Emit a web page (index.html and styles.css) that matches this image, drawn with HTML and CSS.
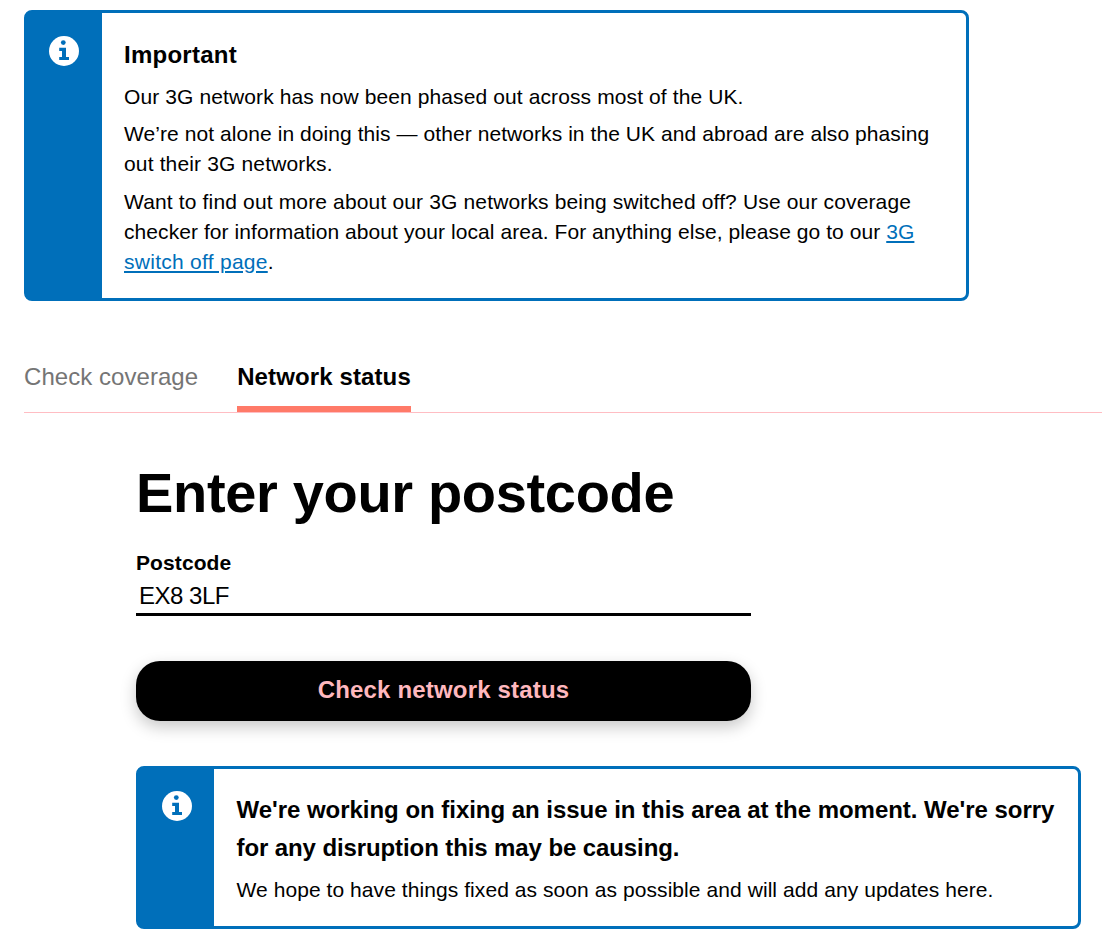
FILE: index.html
```html
<!DOCTYPE html>
<html lang="en">
<head>
    <meta charset="UTF-8">
    <meta name="viewport" content="width=device-width, initial-scale=1.0">
    <title>Network status</title>

    <link rel="stylesheet" href="styles.css">
</head>
<body>

    <section class="notice">
        <div class="notice-side">
            <svg class="info" viewBox="0 0 30 30" aria-hidden="true">
                <circle cx="15" cy="15" r="15" fill="#fff"/>
                <circle cx="14.3" cy="6.6" r="2.4" fill="#006fba"/>
                <path d="M10.2 11.8H17v9.2h3v3h-9.8v-3H13v-6.1h-2.8z" fill="#006fba"/>
            </svg>
        </div>
        <div class="notice-text">
            <h2 class="short">Important</h2>
            <p>Our 3G network has now been phased out across most of the UK.</p>
            <p class="tight">We’re not alone in doing this — other networks in the UK and abroad are also phasing<br><span class="wide">out their 3G networks.</span></p>
            <p><span class="wide">Want to find out more about our 3G networks being switched off? Use our coverage</span><br><span class="tight">checker for information about your local area. For anything else, please go to our <a href="#">3G</a></span><br><span class="wider"><a href="#">switch off page</a>.</span></p>
        </div>
    </section>

    <nav class="tabs">
        <a href="#" class="tab">Check coverage</a>
        <a href="#" class="tab active">Network status</a>
    </nav>

    <main>
        <h1>Enter your postcode</h1>
        <form>
            <label for="postcode">Postcode</label>
            <input id="postcode" type="text" value="EX8 3LF">
            <button type="button">Check network status</button>
        </form>

        <section class="notice status">
            <div class="notice-side">
                <svg class="info" viewBox="0 0 30 30" aria-hidden="true">
                    <circle cx="15" cy="15" r="15" fill="#fff"/>
                    <circle cx="14.3" cy="6.6" r="2.4" fill="#006fba"/>
                    <path d="M10.2 11.8H17v9.2h3v3h-9.8v-3H13v-6.1h-2.8z" fill="#006fba"/>
                </svg>
            </div>
            <div class="notice-text">
                <h2>We're working on fixing an issue in this area at the moment. We're sorry<br><span class="narrow">for any disruption this may be causing.</span></h2>
                <p class="tight">We hope to have things fixed as soon as possible and will add any updates here.</p>
            </div>
        </section>
    </main>

</body>
</html>
```

FILE: styles.css
```css
* { box-sizing: border-box; }
body { font-family: "Liberation Sans", Arial, sans-serif; color: #000; background: #fff; margin: 0; padding: 10px 0 0 24px; overflow: hidden; }
h1, h2, p { margin: 0; }
a { color: #006fba; }
.notice { display: flex; width: 945px; height: 291px; border: 3px solid #006fba; border-radius: 8px; background: #fff; }
.notice-side { flex: none; width: 75px; background: #006fba; padding: 23px 0 0 22px; }
.info { display: block; width: 30px; height: 30px; }
.notice-text { padding: 23px 0 0 22px; white-space: nowrap; }
.notice h2 { font-size: 24px; line-height: 38px; letter-spacing: -0.03px; }
.notice h2.short { letter-spacing: 0.25px; }
.notice p { font-size: 21px; line-height: 30px; margin-top: 7.5px; letter-spacing: 0.11px; }
.notice h2 + p { margin-top: 8px; }
.notice p + p { margin-top: 7px; }
.notice p + p + p { margin-top: 8px; }
.notice .tight { letter-spacing: 0.07px; }
.notice .wide { letter-spacing: 0.15px; }
.notice .wider { letter-spacing: 0.27px; }
.notice .narrow { letter-spacing: -0.1px; }
.tabs { display: flex; gap: 39px; height: 76px; margin-top: 36px; border-bottom: 1px solid #ffbdc3; }
.tab { height: 75px; padding-top: 26px; font-size: 24px; line-height: 28px; color: #757575; text-decoration: none; white-space: nowrap; letter-spacing: 0.05px; }
.tab.active { color: #000; font-weight: bold; border-bottom: 6px solid #ff7a68; letter-spacing: 0.12px; }
main { padding: 45px 0 0 112px; }
h1 { font-size: 56px; line-height: 70px; white-space: nowrap; letter-spacing: -0.33px; }
form { width: 615px; }
label { display: block; margin-top: 22px; font-size: 21px; line-height: 26px; font-weight: bold; letter-spacing: 0.1px; }
input { display: block; width: 100%; height: 40px; padding: 3px 3px 0; border: 0; border-bottom: 3px solid #000; font: 24px "Liberation Sans", Arial, sans-serif; letter-spacing: -0.5px; outline: none; background: #fff; }
button { display: block; width: 100%; height: 60px; padding: 0 0 2px; margin-top: 45px; border: 0; border-radius: 24px; background: #000; color: #ffb8be; font: bold 24px "Liberation Sans", Arial, sans-serif; letter-spacing: 0.17px; box-shadow: 0 6px 16px rgba(0, 0, 0, 0.22); cursor: pointer; }
.status { height: 163px; margin-top: 45px; }
.status .notice-side { padding: 22px 0 0 23px; }
.status .notice-text { padding: 22px 0 0 22.5px; }
```
